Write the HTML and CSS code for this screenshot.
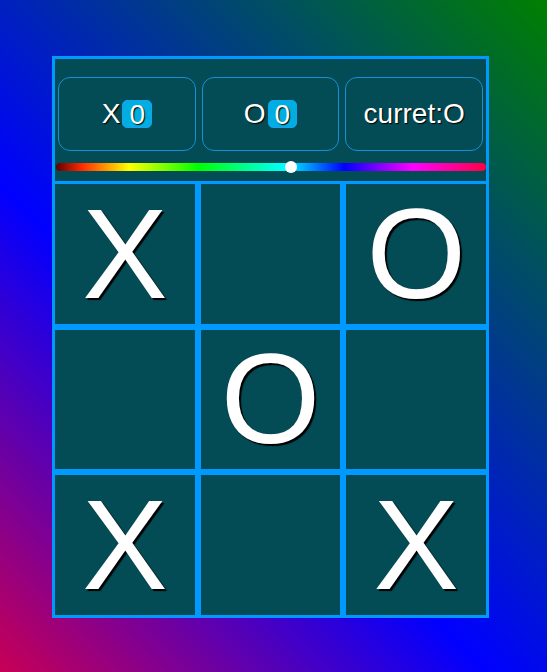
FILE: index.html
```html
<!DOCTYPE html>
<html>
<head>
<meta charset="utf-8">
<link rel="stylesheet" href="styles.css">
</head>
<body>
<div class="game">
  <div class="head">
    <div class="stats">
      <div class="stat">X<span class="badge">0</span></div>
      <div class="stat">O<span class="badge">0</span></div>
      <div class="stat">curret:O</div>
    </div>
    <div class="track"><div class="thumb"></div></div>
  </div>
  <div class="board">
    <div class="cell">X</div>
    <div class="cell"></div>
    <div class="cell">O</div>
    <div class="cell"></div>
    <div class="cell">O</div>
    <div class="cell"></div>
    <div class="cell">X</div>
    <div class="cell"></div>
    <div class="cell">X</div>
  </div>
</div>
</body>
</html>
```
FILE: styles.css
```css
html {
  height: 100%;
}
body {
  margin: 0;
  height: 100%;
  background: linear-gradient(45deg, rgb(200, 0, 85) 0%, #0000ff 40%, #008000 100%);
  font-family: "Liberation Sans", Arial, sans-serif;
  color: #fff;
}
.game {
  width: 437px;
  margin: 0 0 0 52px;
  padding-top: 56px;
}
.head {
  box-sizing: border-box;
  height: 125px;
  border: 3px solid #0099ff;
  border-bottom: none;
  background: #034b55;
  padding: 18px 0 0 0;
}
.stats {
  display: flex;
  gap: 6px;
  padding: 0 3px;
}
.stat {
  flex: 1;
  box-sizing: border-box;
  height: 74px;
  border: 1px solid #1a8fd6;
  border-radius: 12px;
  display: flex;
  align-items: center;
  justify-content: center;
  font-size: 28px;
  text-shadow: 1px 1px 1px #000;
}
.badge {
  display: inline-block;
  height: 28px;
  line-height: 28px;
  padding: 0 6px;
  margin-left: 2px;
  box-sizing: border-box;
  background: #00afe2;
  border: 1px solid #1aa0f0;
  border-radius: 5px;
}
.track {
  position: relative;
  height: 8px;
  margin: 12px 0 0 1px;
  border-radius: 4px;
  background: linear-gradient(90deg, #5a0000 0%, #ff2a00 6%, #ffff00 17%, #00ff00 33%, #00ffff 53%, #0000ff 67%, #ff00ff 83%, #ff0044 100%);
}
.thumb {
  position: absolute;
  left: calc(54.6% - 6px);
  top: -2px;
  width: 12px;
  height: 12px;
  border-radius: 50%;
  background: #fff;
}
.board {
  display: grid;
  grid-template-columns: repeat(3, 1fr);
  grid-template-rows: repeat(3, 1fr);
  height: 437px;
}
.cell {
  box-sizing: border-box;
  border: 3px solid #0099ff;
  background: #034b55;
  display: flex;
  align-items: center;
  justify-content: center;
  font-size: 128px;
  line-height: 1;
  text-shadow: 2px 2px 1px #000;
}
```
